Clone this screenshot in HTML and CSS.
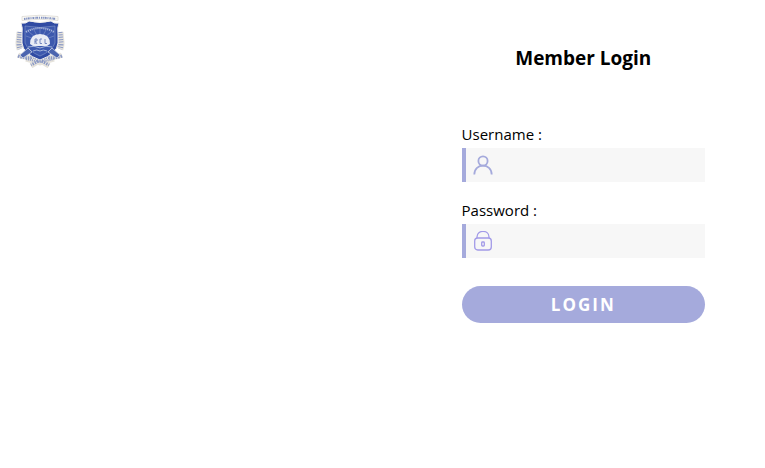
FILE: index.html
```html
<!DOCTYPE html>
<html lang="en">
<head>
<meta charset="utf-8">
<meta name="viewport" content="width=device-width, initial-scale=1">
<title>Member Login</title>
<link rel="stylesheet" href="styles.css">
</head>
<body>
<div class="page">
  <header class="brand">
    <svg class="crest" viewBox="0 0 52 54" aria-hidden="true">
      <path d="M8 2.500Q26 0 44 2.500V6.500Q26 4 8 6.500Z" fill="#fbfaf5" stroke="#dddbd6" stroke-width=".8"/>
      <path d="M10 5Q26 2.500 42 5" fill="none" stroke="#8291c0" stroke-width="2" stroke-dasharray="1.500 .7 1 .5 2 .8 1 1"/>
      <g fill="none" stroke="#e6e3dc">
        <path d="M6 18L5 29Q5 33 6 35M46 18L47 29Q47 33 46 35" stroke-width="7"/>
        <path d="M4 41Q12 45 20 43L35 52M48 41Q40 45 32 43L17 52M12 45L26 49L40 45" stroke-width="5"/>
      </g>
      <g fill="none" stroke="#8998c5">
        <path d="M6 18L5 29Q5 33 6 35M46 18L47 29Q47 33 46 35" stroke-width="5" stroke-dasharray="1 1.400"/>
        <path d="M4 42Q12 45 20 43L35 51M48 42Q40 45 32 43L17 51" stroke-width="3" stroke-dasharray="1.500 1"/>
        <path d="M12 45L26 48L40 45" stroke-width="2" stroke-dasharray="1 1"/>
      </g>
      <path d="M7 9Q12 10 15 7Q26 10 37 7Q40 10 45 9Q43 14 44 20V29Q43 40 26 46Q9 40 8 29V20Q9 14 7 9Z" fill="#304ba3" stroke="#f1f0ee"/>
      <path d="M11 12Q26 15 41 12V29Q38 37 26 42Q14 37 11 29Z" fill="#3d59ae" stroke="#7d90c7" stroke-width=".7"/>
      <path d="M12 18Q26 10 40 18" fill="none" stroke="#a9b6db" stroke-width="2" stroke-dasharray="1.200 .8"/>
      <path d="M26 27L12 22M26 27L15 18M26 27L20 16M26 27V15M26 27L32 16M26 27L37 18M26 27L40 22" stroke="#7085c4" stroke-width=".8"/>
      <path d="M16 30Q16 20 26 20Q36 20 36 30L33 32H19Z" fill="#e9ecf5"/>
      <path d="M21 25V30M21 25H23V27H21L23 30M28 25H26V29.500H28M31 25V29.500H33" fill="none" stroke="#6c80bb" stroke-width=".9"/>
      <path d="M14 33Q20 31 26 34Q32 31 38 33M19 37Q23 35 26 37Q29 35 33 37" fill="none" stroke="#b0bee0" stroke-width=".9"/>
      <path d="M6 41L14 34L18 38L9 44ZM46 41L38 34L34 38L43 44Z" fill="#4b64af" stroke="#d9dde9" stroke-width=".7"/>
    </svg>
  </header>
  <main class="panel">
    <h1 class="title">Member Login</h1>
    <form class="form">
      <div class="group">
        <label class="label" for="username">Username :</label>
        <div class="field">
          <svg class="icon" viewBox="0 0 20 20" aria-hidden="true">
            <circle cx="10" cy="6" r="4.600"/>
            <path d="M1.300 19.500C1.300 7.700 18.700 7.700 18.700 19.500"/>
          </svg>
          <input class="input" id="username" type="text" autocomplete="username">
        </div>
      </div>
      <div class="group">
        <label class="label" for="password">Password :</label>
        <div class="field">
          <svg class="icon icon-lock" viewBox="0 0 20 20" aria-hidden="true">
            <rect x="1.700" y="7" width="16.600" height="12" rx="3"/>
            <path d="M4 7V6C4-1.500 16-1.500 16 6V7"/>
            <rect x="8.700" y="11" width="2.600" height="4" rx=".8"/>
          </svg>
          <input class="input" id="password" type="password" autocomplete="current-password">
        </div>
      </div>
      <button class="submit" type="submit">LOGIN</button>
    </form>
  </main>
</div>
</body>
</html>
```
FILE: styles.css
```css
* {
  box-sizing: border-box;
}

body {
  margin: 0;
  background: #fff;
  color: #000;
  font-family: "Open Sans", "Noto Sans", sans-serif;
  font-size: 15px;
}

.page {
  display: grid;
  grid-template-columns: 525fr 475fr;
  min-height: 100vh;
}

.brand {
  padding: 14px;
}

.crest {
  display: block;
  width: 52px;
  height: 54px;
}

.panel {
  display: flex;
  flex-direction: column;
  align-items: center;
  padding-top: 44px;
}

.title {
  margin: 0;
  font-size: 19px;
  line-height: 28px;
}

.form {
  display: flex;
  flex-direction: column;
  width: 67%;
  margin-top: 52px;
}

.group {
  display: flex;
  flex-direction: column;
  margin-bottom: 18px;
}

.label {
  line-height: 20px;
  margin-bottom: 4px;
}

.field {
  display: flex;
  align-items: center;
  height: 34px;
  padding-left: 7px;
  border-left: 4px solid #a5aadc;
  background: #f7f7f7;
}

.icon {
  flex: none;
  width: 20px;
  height: 20px;
  fill: none;
  stroke: #a5aadc;
  stroke-width: 1.8;
}

.icon-lock {
  stroke: #a39be8;
  stroke-width: 1.3;
}

.input {
  flex: 1;
  min-width: 0;
  height: 100%;
  padding: 0 8px;
  border: 0;
  outline: 0;
  background: transparent;
  font: inherit;
}

.submit {
  height: 37px;
  margin-top: 10px;
  border: 0;
  border-radius: 19px;
  background: #a5aadc;
  color: #fff;
  font-family: inherit;
  font-size: 17px;
  font-weight: 700;
  letter-spacing: 2px;
  cursor: pointer;
}
```
